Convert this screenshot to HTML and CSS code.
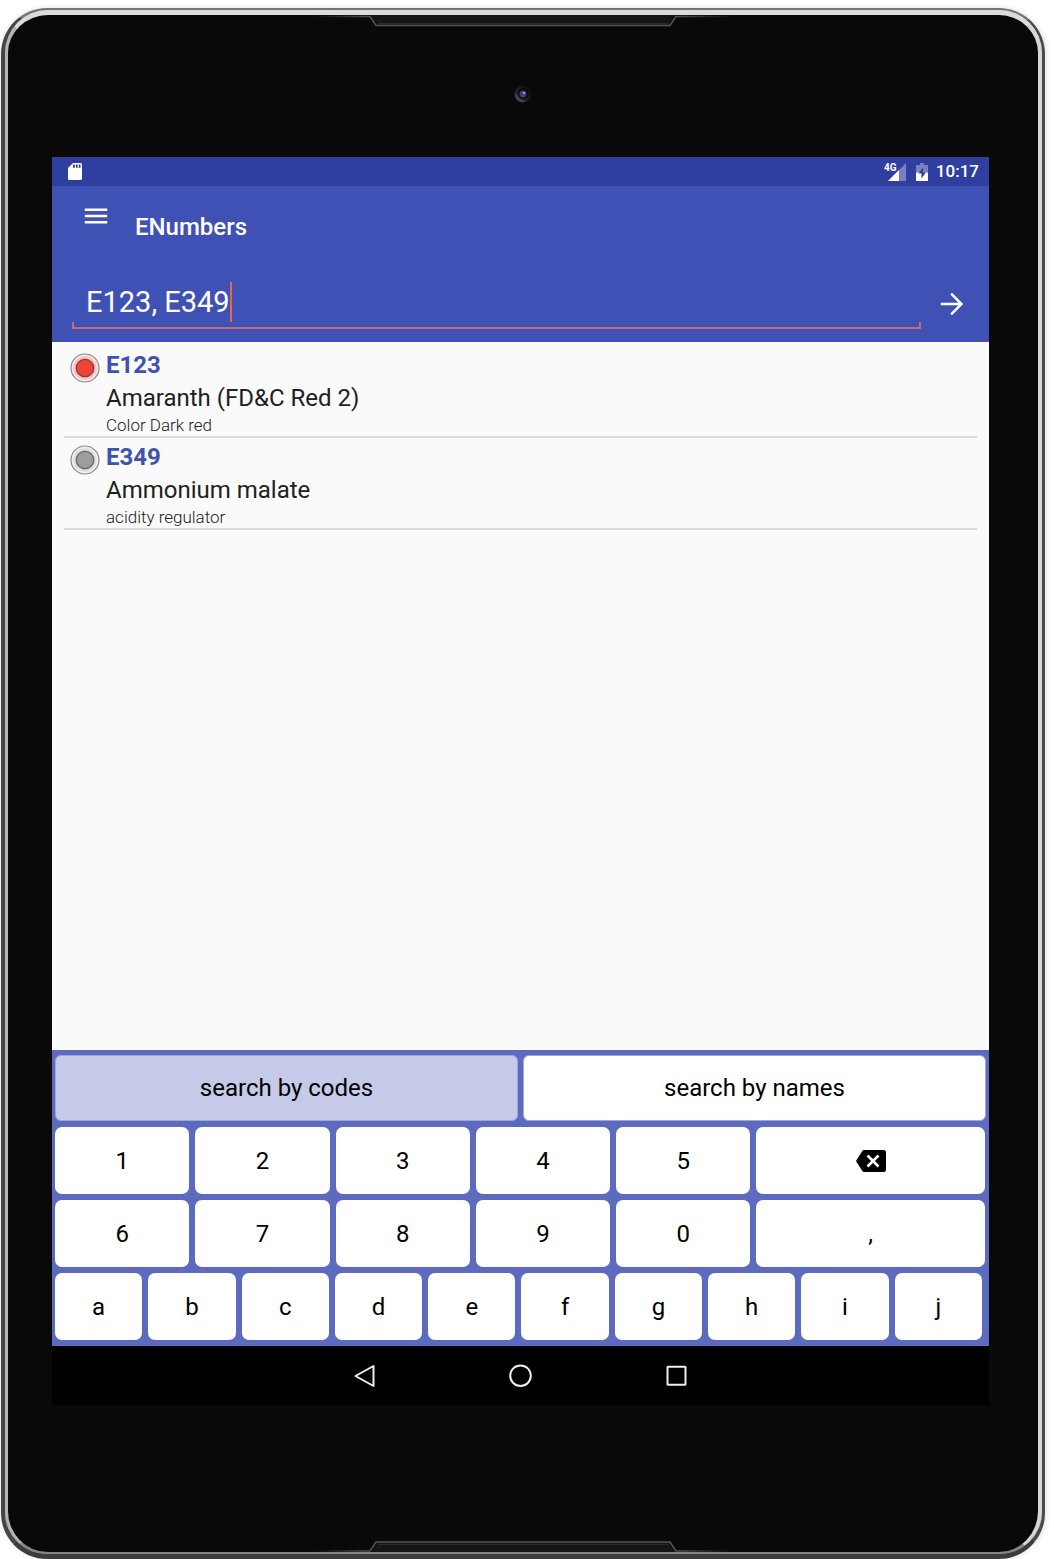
FILE: index.html
```html
<!DOCTYPE html>
<html lang="en">
<head>
<meta charset="utf-8">
<meta name="viewport" content="width=device-width, initial-scale=1">
<title>ENumbers</title>
<link rel="stylesheet" href="styles.css">
</head>
<body>
<div class="device">
  <div class="bezel">
    <div class="bezel-top">
      <svg class="speaker" viewBox="0 0 420 12" aria-hidden="true">
        <defs>
          <linearGradient id="fade"><stop offset="0" stop-color="#555" stop-opacity="0"/><stop offset=".14" stop-color="#555"/><stop offset=".86" stop-color="#555"/><stop offset="1" stop-color="#555" stop-opacity="0"/></linearGradient>
        </defs>
        <path d="M58 0 64 10H356L362 0Z" fill="#151515"/>
        <path d="M0 1.500H57L63 10.500H357L363 1.500H420" fill="none" stroke="url(#fade)" stroke-width="1.500"/>
        <path d="M65 8.500H355" stroke="#2b2b2b"/>
      </svg>
      <svg class="camera" viewBox="0 0 18 18" aria-hidden="true">
        <defs><linearGradient id="lens" x1="0" y1="1" x2=".7" y2=".2"><stop offset="0" stop-color="#777"/><stop offset=".5" stop-color="#222"/><stop offset="1" stop-color="#111"/></linearGradient></defs>
        <circle cx="9" cy="9" r="8.500" fill="url(#lens)"/>
        <circle cx="9.500" cy="8.500" r="5.500" fill="#0b0b10"/>
        <circle cx="9" cy="9" r="3.400" fill="#3a4078"/>
        <circle cx="10" cy="8" r="1.300" fill="#8a8fc8"/>
      </svg>
    </div>

    <div class="screen">
      <div class="status">
        <svg class="sd" viewBox="0 0 14 17" aria-hidden="true"><path d="M5 0h7.500A1.500 1.500 0 0 1 14 1.500v14a1.500 1.500 0 0 1-1.500 1.500h-11A1.500 1.500 0 0 1 0 15.500V5Z" fill="#fff"/><path d="M5 1.500h1.800v3.200H5zm2.900 0h1.800v3.200H7.900zm2.900 0h1.700v3.200h-1.700z" fill="#303f9f"/></svg>
        <svg class="signal" viewBox="0 0 22 18" role="img" aria-label="4G signal"><path d="M22 0V18H4Z" fill="#fff" opacity=".35"/><path d="M15 7V18H4Z" fill="#fff"/><text x="0" y="8" class="net">4G</text></svg>
        <svg class="battery" viewBox="0 0 12 18" aria-hidden="true"><path d="M4 0h4v2h4v7.500H0V2h4z" fill="#fff" opacity=".35"/><path d="M0 9.500h12V18H0z" fill="#fff"/><path d="M7 4.500 2.500 10.500H5.500V15.500L9.800 9.500H7Z" fill="#303f9f"/></svg>
        <time class="clock">10:17</time>
      </div>

      <header class="appbar">
        <div class="toolbar">
          <button class="icon-btn" aria-label="Menu"><svg class="icon" viewBox="0 0 24 24"><path d="M3 18h18v-2H3zm0-5h18v-2H3zm0-7v2h18V6z" fill="#fff"/></svg></button>
          <h1 class="title">ENumbers</h1>
        </div>
        <form class="search">
          <div class="field">
            <input class="query" type="text" aria-label="E numbers" value="E123, E349">
            <span class="caret"></span>
            <div class="underline"></div>
          </div>
          <button class="icon-btn go" type="button" aria-label="Search"><svg class="icon" viewBox="0 0 24 24"><path d="m12 3-1.400 1.400 6.600 6.600H3v2h14.200l-6.600 6.600L12 21l9-9z" fill="#fff"/></svg></button>
        </form>
      </header>

      <ul class="results">
        <li class="item">
          <svg class="dot" viewBox="0 0 30 30" aria-hidden="true">
            <defs><radialGradient id="red"><stop offset=".6" stop-color="#f44336" stop-opacity=".5"/><stop offset="1" stop-color="#f44336" stop-opacity="0"/></radialGradient></defs>
            <circle cx="15" cy="15" r="14" fill="url(#red)" stroke="#888" stroke-width="1.200"/><circle cx="15" cy="15" r="8.700" fill="#f44336" stroke="#704846" stroke-width="1.200"/>
          </svg>
          <div><h2 class="code">E123</h2><p class="name">Amaranth (FD&amp;C Red 2)</p><p class="note">Color Dark red</p></div>
        </li>
        <li class="item">
          <svg class="dot" viewBox="0 0 30 30" aria-hidden="true">
            <defs><radialGradient id="gray"><stop offset=".6" stop-color="#9e9e9e" stop-opacity=".5"/><stop offset="1" stop-color="#9e9e9e" stop-opacity="0"/></radialGradient></defs>
            <circle cx="15" cy="15" r="14" fill="url(#gray)" stroke="#888" stroke-width="1.200"/><circle cx="15" cy="15" r="8.700" fill="#9e9e9e" stroke="#666" stroke-width="1.200"/>
          </svg>
          <div><h2 class="code">E349</h2><p class="name">Ammonium malate</p><p class="note">acidity regulator</p></div>
        </li>
      </ul>

      <div class="keyboard">
        <div class="row modes"><button class="key mode selected">search by codes</button><button class="key mode">search by names</button></div>
        <div class="row"><button class="key">1</button><button class="key">2</button><button class="key">3</button><button class="key">4</button><button class="key">5</button><button class="key wide" aria-label="Delete"><svg class="backspace" viewBox="0 0 30 22"><path d="M8 0H27.500A2.500 2.500 0 0 1 30 2.500v17A2.500 2.500 0 0 1 27.500 22H8Q7 22 6.300 21L0 11 6.300 1Q7 0 8 0Z" fill="#000"/><path d="m11.500 5.500 11 11m0-11-11 11" stroke="#fff" stroke-width="2.600"/></svg></button></div>
        <div class="row"><button class="key">6</button><button class="key">7</button><button class="key">8</button><button class="key">9</button><button class="key">0</button><button class="key wide">,</button></div>
        <div class="row letters"><button class="key">a</button><button class="key">b</button><button class="key">c</button><button class="key">d</button><button class="key">e</button><button class="key">f</button><button class="key">g</button><button class="key">h</button><button class="key">i</button><button class="key">j</button></div>
      </div>

      <nav class="navbar">
        <button class="nav-btn" aria-label="Back"><svg class="nav-icon" viewBox="0 0 24 24"><path d="M20.500 2V22L2.500 12Z"/></svg></button>
        <button class="nav-btn" aria-label="Home"><svg class="nav-icon" viewBox="0 0 24 24"><circle cx="11.500" cy="11.700" r="10.300"/></svg></button>
        <button class="nav-btn" aria-label="Recent apps"><svg class="nav-icon" viewBox="0 0 24 24"><rect x="2.500" y="2.700" width="18" height="18" rx=".5"/></svg></button>
      </nav>
    </div>

    <div class="bezel-bottom">
      <svg class="speaker" viewBox="0 0 420 12" aria-hidden="true">
        <path d="M58 12 64 2H356L362 12Z" fill="#151515"/>
        <path d="M0 11H57L63 2H357L363 11H420" fill="none" stroke="url(#fade)" stroke-width="1.500"/>
        <path d="M65 4.500H355" stroke="#2b2b2b"/>
      </svg>
    </div>
  </div>
</div>
</body>
</html>
```
FILE: styles.css
```css
* { box-sizing: border-box; }

body {
  margin: 0;
  padding: 8px 9px 0 1px;
  min-height: 100vh;
  display: flex;
  background: #fff;
  font-family: Roboto, "Liberation Sans", sans-serif;
  color: #212121;
}

button, input { font: inherit; color: inherit; border: 0; padding: 0; margin: 0; background: none; }
h1, h2, p, ul { margin: 0; padding: 0; font-weight: 400; }
svg { display: block; flex: none; }

/* Tablet casing: dark outer edge with a bright inner rim */
.device {
  flex: 1;
  display: flex;
  border: solid;
  border-width: 2px 3px 5px 4px;
  border-color: #747474 #4a4a4a #3d3b3c #454747;
  border-radius: 46px;
  background: #999;
  box-shadow: 1px 0 6px rgba(0, 0, 0, .12);
}
.bezel {
  flex: 1;
  min-width: 0;
  display: flex;
  flex-direction: column;
  border: solid;
  border-width: 5px 4px 2px 3px;
  border-color: #dcdcdc #d8d6d6 #858585 #b4b4b4;
  border-radius: 43px;
  background: #090909;
}
.bezel-top { height: 142px; display: flex; flex-direction: column; align-items: center; gap: 58px; }
.bezel-bottom { height: 147px; display: flex; flex-direction: column; justify-content: flex-end; align-items: center; }
.speaker { width: 420px; height: 12px; }
.camera { width: 18px; height: 18px; }

.screen {
  flex: 1;
  display: flex;
  flex-direction: column;
  margin: 0 49px 0 44px;
  background: #fafafa;
}

.status {
  height: 29px;
  display: flex;
  align-items: center;
  padding: 0 10px 0 16px;
  background: #303f9f;
  color: #fff;
}
.sd { width: 14px; height: 17px; margin-right: auto; }
.signal { width: 22px; height: 18px; margin-right: 10px; }
.battery { width: 12px; height: 18px; margin-right: 8px; }
.net { font: 700 10px Roboto, sans-serif; fill: #fff; }
.clock { font-size: 17px; font-weight: 500; line-height: 29px; }

.appbar { padding-bottom: 13px; background: #3f51b5; color: #fff; }
.toolbar { height: 98px; display: flex; align-items: flex-start; gap: 24px; padding: 15px 29px 0; }
.icon-btn { flex: none; }
.icon { width: 30px; height: 30px; }
.title { font-size: 24px; font-weight: 500; line-height: 52px; }
.search { display: flex; align-items: flex-start; gap: 16px; padding: 0 22px 0 20px; }
.field { flex: 1; position: relative; }
.query { display: block; width: 100%; height: 38px; padding: 0 14px 2px; font-size: 29px; outline: 0; }
.caret { position: absolute; left: 158px; top: -2px; width: 2px; height: 40px; background: #e2694f; }
.underline { height: 7px; border: 2px solid #c96a71; border-top: 0; }
.go { height: 40px; }

.results { flex: 1; list-style: none; padding: 4px 12px; }
.item { display: flex; gap: 6px; padding: 3px 6px 0; border-bottom: 2px solid #dcdcdc; }
.dot { width: 30px; height: 30px; margin-top: 4px; }
.code { font-size: 24px; font-weight: 700; line-height: 33px; color: #3f51b5; }
.name { font-size: 24px; line-height: 33px; }
.note { font-size: 17px; font-weight: 300; line-height: 21px; }

.keyboard { display: flex; flex-direction: column; gap: 6px; padding: 5px 3px 6px; background: #5c6bc0; }
.row { display: flex; gap: 6px; padding-right: 1px; }
.modes { gap: 5px; padding-right: 0; }
.letters { padding-right: 4px; }
.key {
  flex: 134 1 0;
  min-width: 0;
  height: 67px;
  display: flex;
  align-items: center;
  justify-content: center;
  border-radius: 7px;
  background: #fff;
  color: #000;
  font-size: 24px;
}
.wide { flex-grow: 228; }
.mode { height: 66px; border: 1px solid #9fa8da; border-radius: 6px; }
.backspace { width: 30px; height: 22px; }
.selected { background: #c5cae9; }

.navbar { height: 59px; display: flex; justify-content: center; gap: 132px; background: #000; }
.nav-btn { display: flex; align-items: center; }
.nav-icon { width: 24px; height: 24px; fill: none; stroke: #eee; stroke-width: 2; stroke-linejoin: round; }
```
